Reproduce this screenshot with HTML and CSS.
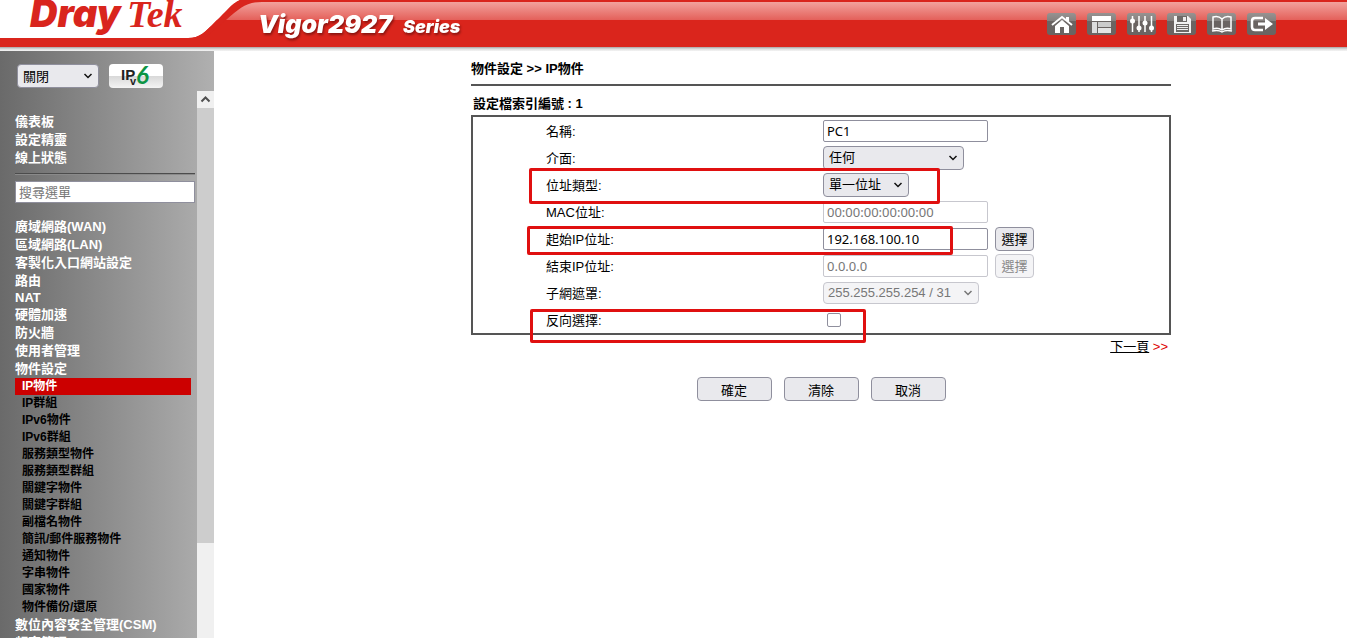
FILE: index.html
```html
<!DOCTYPE html>
<html lang="zh-Hant">

<head>
    <meta charset="UTF-8">
    <meta name="viewport" content="width=device-width, initial-scale=1.0">
    <title>Vigor2927 Series</title>
    <link rel="stylesheet" href="styles.css">
</head>

<body>
    <header class="header">
        <svg class="brand" width="480" height="51" viewBox="0 0 480 51" role="img" aria-label="DrayTek Vigor2927 Series">
            <path d="M0 0H240C232 3 226 12 216 21C205 32 200 38 188 38H0Z" fill="#fff"/>
            <path d="M262 0H240C232 3 226 12 216 21C205 32 200 38 188 38H205L226 20C240 8 246 2 262 2H480V0Z" fill="#d9251d"/>
            <text class="logo-dray" x="30" y="27">Dray</text>
            <text class="logo-tek" x="127" y="27">Tek</text>
            <text class="model" x="258" y="33">Vigor2927</text>
            <text class="series" x="403" y="33">Series</text>
        </svg>
        <nav class="tools">
            <a href="#" aria-label="Home"><svg viewBox="0 0 29 22"><path d="M5 12L15 4L25 12" fill="none" stroke="#fff" stroke-width="2"/><path d="M19 4h3v5l-3-2zM8 13L15 7L22 13V20H17V14H13V20H8Z" fill="#fff"/></svg></a>
            <a href="#" aria-label="Layout"><svg viewBox="0 0 29 22"><path d="M5 3h19v5H5z" fill="#fff"/><path d="M5 9h5v11H5z" fill="#ddd"/><path d="M11 9h13v5H11z" fill="#ccc"/><path d="M11 15h13v5H11z" fill="#e4e4e4"/></svg></a>
            <a href="#" aria-label="Settings"><svg viewBox="0 0 29 22"><path d="M5.500 3v16M12 3v16M18 3v16M24.500 3v16" stroke="#fff" stroke-width="1.500"/><g fill="#fff"><circle cx="5.500" cy="8" r="2.500"/><circle cx="12" cy="15" r="2.500"/><circle cx="18" cy="10" r="2.500"/><circle cx="24.500" cy="15" r="2.500"/></g></svg></a>
            <a href="#" aria-label="Save"><svg viewBox="0 0 29 22"><path d="M7 3H21L24 6V20H7Z" fill="#f2f2f2"/><path d="M10 3h10v6H10zM9 11h13v8H9z" fill="#6d6a68"/><path d="M16 4h3v4h-3zM10 12h11v1H10zM10 14h11v1H10zM10 16h11v1H10z" fill="#eee"/></svg></a>
            <a href="#" aria-label="Manual"><svg viewBox="0 0 29 22"><path d="M15 6C12 3 9 3 6 4V16C9 15 12 15 15 17C18 15 21 15 24 16V4C21 3 18 3 15 6V17M5 18C9 17 12 17 15 19C18 17 21 17 25 18" fill="none" stroke="#fff" stroke-width="1.500"/></svg></a>
            <a href="#" aria-label="Logout"><svg viewBox="0 0 29 22"><path d="M16 5H8Q5 5 5 8V14Q5 17 8 17H16" fill="none" stroke="#fff" stroke-width="2.500"/><path d="M11 9.500h7V5l8 6l-8 6V12.500H11z" fill="#fff"/></svg></a>
        </nav>
    </header>

    <div class="page">
        <aside class="sidebar">
            <div class="sidebar-top">
                <select class="control mode" aria-label="模式">
                    <option>關閉</option>
                </select>
                <button class="ipv6" type="button" aria-label="IPv6">
                    <svg width="54" height="24" viewBox="0 0 54 24">
                        <text class="ip" x="12" y="16">IP</text>
                        <text class="v" x="21" y="21">v</text>
                        <text class="six" x="27" y="20">6</text>
                    </svg>
                </button>
            </div>
            <div class="sidebar-body">
                <nav class="menu">
                    <ul class="menu-list">
                        <li><a href="#">儀表板</a></li>
                        <li><a href="#">設定精靈</a></li>
                        <li><a href="#">線上狀態</a></li>
                    </ul>
                    <hr class="menu-line">
                    <input class="search" type="text" placeholder="搜尋選單" aria-label="搜尋選單">
                    <ul class="menu-list">
                        <li><a href="#">廣域網路(WAN)</a></li>
                        <li><a href="#">區域網路(LAN)</a></li>
                        <li><a href="#">客製化入口網站設定</a></li>
                        <li><a href="#">路由</a></li>
                        <li class="latin"><a href="#">NAT</a></li>
                        <li><a href="#">硬體加速</a></li>
                        <li><a href="#">防火牆</a></li>
                        <li><a href="#">使用者管理</a></li>
                        <li><a href="#">物件設定</a>
                            <ul class="submenu">
                                <li class="active"><a href="#">IP物件</a></li>
                                <li><a href="#">IP群組</a></li>
                                <li><a href="#">IPv6物件</a></li>
                                <li><a href="#">IPv6群組</a></li>
                                <li><a href="#">服務類型物件</a></li>
                                <li><a href="#">服務類型群組</a></li>
                                <li><a href="#">關鍵字物件</a></li>
                                <li><a href="#">關鍵字群組</a></li>
                                <li><a href="#">副檔名物件</a></li>
                                <li><a href="#">簡訊/郵件服務物件</a></li>
                                <li><a href="#">通知物件</a></li>
                                <li><a href="#">字串物件</a></li>
                                <li><a href="#">國家物件</a></li>
                                <li><a href="#">物件備份/還原</a></li>
                            </ul>
                        </li>
                        <li><a href="#">數位內容安全管理(CSM)</a></li>
                        <li><a href="#">頻寬管理</a></li>
                    </ul>
                </nav>
                <div class="scrollbar">
                    <div class="scroll-up"><svg width="17" height="17" viewBox="0 0 17 17"><path d="M4.500 10.500L8.500 6.500L12.500 10.500" fill="none" stroke="#505050" stroke-width="2"/></svg></div>
                    <div class="scroll-track"><div class="scroll-thumb"></div></div>
                </div>
            </div>
        </aside>

        <main class="content">
            <form class="profile">
                <h1 class="crumb">物件設定 &gt;&gt; IP物件</h1>
                <h2 class="index">設定檔索引編號 : 1</h2>
                <div class="box">
                    <table class="fields">
                        <tr>
                            <th><label for="name">名稱:</label></th>
                            <td><input class="text" type="text" id="name" value="PC1"></td>
                        </tr>
                        <tr>
                            <th><label for="iface">介面:</label></th>
                            <td><select class="control iface" id="iface"><option>任何</option></select></td>
                        </tr>
                        <tr>
                            <th><label for="type">位址類型:</label></th>
                            <td><select class="control type" id="type"><option>單一位址</option></select></td>
                        </tr>
                        <tr>
                            <th><label for="mac">MAC位址:</label></th>
                            <td><input class="text" type="text" id="mac" value="00:00:00:00:00:00" disabled></td>
                        </tr>
                        <tr>
                            <th><label for="start">起始IP位址:</label></th>
                            <td><div class="pair"><input class="text" type="text" id="start" value="192.168.100.10"><button class="btn pick" type="button">選擇</button></div></td>
                        </tr>
                        <tr>
                            <th><label for="end">結束IP位址:</label></th>
                            <td><div class="pair"><input class="text" type="text" id="end" value="0.0.0.0" disabled><button class="btn pick" type="button" disabled>選擇</button></div></td>
                        </tr>
                        <tr>
                            <th><label for="mask">子網遮罩:</label></th>
                            <td><select class="control mask" id="mask" disabled><option>255.255.255.254 / 31</option></select></td>
                        </tr>
                        <tr>
                            <th><label for="invert">反向選擇:</label></th>
                            <td><input class="check" type="checkbox" id="invert"></td>
                        </tr>
                    </table>
                    <div class="mark mark-type"></div>
                    <div class="mark mark-start"></div>
                    <div class="mark mark-invert"></div>
                </div>
                <p class="next"><a href="#">下一頁</a> <span>&gt;&gt;</span></p>
                <div class="actions">
                    <button class="btn action" type="submit">確定</button>
                    <button class="btn action" type="button">清除</button>
                    <button class="btn action" type="button">取消</button>
                </div>
            </form>
        </main>
    </div>
</body>

</html>
```
FILE: styles.css
```css
* {
    box-sizing: border-box;
}
body {
    margin: 0;
    height: 100vh;
    display: flex;
    flex-direction: column;
    overflow: hidden;
    font-family: "Liberation Sans", "Noto Sans CJK TC", sans-serif;
    font-size: 13px;
    color: #000;
    background: #fff;
}
ul {
    list-style: none;
    margin: 0;
    padding: 0;
}

/* header */
.header {
    flex: none;
    height: 51px;
    display: flex;
    justify-content: space-between;
    background: linear-gradient(#d9251d 0, #d9251d 2px, #f2a29d 2px, #e4605a 20px, #da251c 20px, #da251c 47px, #a9a3a3 47px, #ddd 49px, #f4f4f4 51px);
}
.brand {
    display: block;
}
.brand text {
    font-style: italic;
}
.logo-dray {
    font-family: Inter, sans-serif;
    font-weight: 900;
    font-size: 38px;
    fill: #d9251d;
}
.logo-tek {
    font-family: "Liberation Serif", serif;
    font-weight: bold;
    font-size: 38px;
    fill: #d9251d;
}
.model,
.series {
    font-family: Inter, sans-serif;
    font-weight: 900;
    fill: #fff;
    filter: drop-shadow(1px 2px 1px #8a1510);
}
.model {
    font-size: 25px;
}
.series {
    font-size: 18px;
}
.tools {
    display: flex;
    gap: 11px;
    padding: 13px 71px 0 0;
}
.tools a {
    width: 29px;
    height: 22px;
    border-radius: 3px;
    background: linear-gradient(#979291 0, #85807e 8px, #6a6462 8px, #6a6462 100%);
}
.tools svg {
    display: block;
}

/* sidebar */
.page {
    flex: 1;
    min-height: 0;
    display: flex;
}
.sidebar {
    flex: none;
    width: 214px;
    display: flex;
    flex-direction: column;
    background: linear-gradient(90deg, #6a6a6a, #b0b0b0);
}
.sidebar-top {
    flex: none;
    height: 40px;
    display: flex;
    align-items: center;
    gap: 10px;
    padding: 10px 0 0 17px;
}
.control {
    height: 24px;
    padding: 0 5px;
    border: 1px solid #8f8f9d;
    border-radius: 4px;
    font-family: inherit;
    font-size: 13px;
    color: #000;
    appearance: none;
    background: #e9e9ed url("data:image/svg+xml,%3Csvg xmlns='http://www.w3.org/2000/svg' width='10' height='6'%3E%3Cpath d='M1.500 1l3.500 3.500l3.500-3.500' fill='none' stroke='%23111' stroke-width='1.500'/%3E%3C/svg%3E") no-repeat right 5px center;
}
.mode {
    width: 82px;
}
.ipv6 {
    width: 54px;
    height: 24px;
    padding: 0;
    border: 0;
    border-radius: 4px;
    background: linear-gradient(#fff 0, #fff 50%, #d8d8d8 50%, #f4f4f4 100%);
}
.ipv6 svg {
    display: block;
}
.ip,
.v {
    font-weight: bold;
    fill: #222;
}
.ip {
    font-size: 15px;
}
.v {
    font-size: 11px;
}
.six {
    font-family: Lato, sans-serif;
    font-style: italic;
    font-weight: bold;
    font-size: 24px;
    fill: #0c9444;
}
.sidebar-body {
    flex: 1;
    min-height: 0;
    display: flex;
}
.menu {
    flex: 1;
    overflow: hidden;
    padding: 22px 2px 0 15px;
}
.menu a {
    display: block;
    color: #fff;
    font-weight: bold;
    text-decoration: none;
}
.menu-list a {
    line-height: 18px;
}
.menu-list .latin a {
    line-height: 16px;
}
.menu-line {
    margin: 6px 0;
    border: 0;
    border-top: 1px solid #4c4c4c;
    border-bottom: 1px solid #8a8a8a;
}
.search {
    display: block;
    width: 100%;
    height: 22px;
    margin-bottom: 15px;
    padding: 0 3px;
    border: 1px solid #8f8f9d;
    font-family: inherit;
    font-size: 13px;
}
.search::placeholder {
    color: #777;
}
.menu .submenu a {
    margin-right: 4px;
    padding-left: 7px;
    line-height: 17px;
    font-size: 12px;
    color: #000;
}
.menu .submenu .active a {
    color: #fff;
    background: #c00;
}
.scrollbar {
    flex: none;
    width: 17px;
    display: flex;
    flex-direction: column;
    background: #f0f0f0;
}
.scroll-up {
    height: 17px;
}
.scroll-up svg {
    display: block;
}
.scroll-track {
    flex: 1;
}
.scroll-thumb {
    height: 82%;
    background: #cdcdcd;
}

/* content */
.content {
    flex: 1;
    padding-left: 81px;
}
.profile {
    max-width: 700px;
    margin: 0 auto;
}
.crumb,
.index {
    margin: 0;
    font-size: 13px;
    line-height: 18px;
}
.crumb {
    padding: 9px 0 6px;
    border-bottom: 2px solid #555;
}
.index {
    padding: 9px 2px 2px;
}
.box {
    position: relative;
    border: 2px solid #555;
}
.fields {
    width: 100%;
    border-collapse: collapse;
    table-layout: fixed;
}
.fields tr {
    height: 27px;
}
.fields th {
    width: 350px;
    padding: 0 0 0 73px;
    text-align: left;
    font-weight: normal;
}
.fields td {
    padding: 0;
}
.pair {
    display: flex;
    align-items: center;
    gap: 7px;
}
.text {
    display: block;
    width: 165px;
    height: 22px;
    padding: 0 3px;
    border: 1px solid #8f8f9d;
    border-radius: 2px;
    font-family: "Noto Sans", "Noto Sans CJK TC", sans-serif;
    font-size: 13px;
    color: #000;
    background: #fff;
}
.text:disabled {
    color: #777;
    border-color: #c7c7ce;
}
.fields .control {
    display: block;
}
.control:disabled {
    opacity: 1;
    height: 22px;
    padding: 0 4px;
    color: #777;
    border-color: #c7c7ce;
    background-color: #f4f4f6;
    background-image: url("data:image/svg+xml,%3Csvg xmlns='http://www.w3.org/2000/svg' width='10' height='6'%3E%3Cpath d='M1.500 1l3.500 3.500l3.500-3.500' fill='none' stroke='%23777' stroke-width='1.500'/%3E%3C/svg%3E");
}
.iface {
    width: 141px;
}
.type {
    width: 86px;
}
.mask {
    width: 156px;
}
.check {
    display: block;
    width: 14px;
    height: 14px;
    margin: 0 4px;
    appearance: none;
    border: 1px solid #8f8f9d;
    border-radius: 2px;
    background: #fff;
}
.check:checked {
    background: #0060df;
}
.btn {
    height: 24px;
    padding: 0;
    border: 1px solid #8f8f9d;
    border-radius: 4px;
    font-family: inherit;
    font-size: 13px;
    color: #000;
    background: #e9e9ed;
}
.btn:disabled {
    color: #888;
    border-color: #c7c7ce;
    background: #f4f4f6;
}
.pick {
    width: 39px;
}
.action {
    width: 75px;
}
.mark {
    position: absolute;
    border: 3px solid #e01010;
    border-radius: 2px;
    pointer-events: none;
}
.mark-type {
    top: 51px;
    left: 56px;
    width: 411px;
    height: 36px;
}
.mark-start {
    top: 109px;
    left: 54px;
    width: 426px;
    height: 29px;
}
.mark-invert {
    top: 192px;
    left: 57px;
    width: 336px;
    height: 34px;
}
.next {
    margin: 2px 3px 20px 0;
    line-height: 20px;
    text-align: right;
}
.next a {
    color: #000;
}
.next span {
    color: #d00;
}
.actions {
    display: flex;
    justify-content: center;
    gap: 12px;
}
```
